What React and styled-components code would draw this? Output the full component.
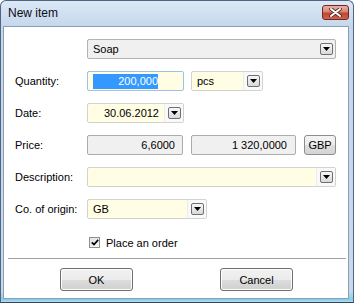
import styled, { createGlobalStyle } from "styled-components";

const GlobalStyle = createGlobalStyle`
  html, body {
    margin: 0;
    padding: 0;
    background: #ffffff;
  }
  body {
    font-family: "Liberation Sans", Arial, sans-serif;
    font-size: 11px;
    color: #000;
  }
`;

const Window = styled.div`
  width: 354px;
  height: 303px;
  box-sizing: border-box;
  display: flex;
  flex-direction: column;
  padding: 0 4px 3px 2px;
  border: 1px solid #4f6580;
  border-bottom-color: #2b4563;
  border-radius: 6px 6px 0 0;
  background: linear-gradient(#dce8f5 0px, #c5d7ed 26px, #c8d9ee 290px, #7fd0ea 299px, #c8d9ee 301px);
`;

const TitleBar = styled.div`
  height: 25px;
  display: flex;
  justify-content: space-between;
  padding: 0 0 0 5px;
`;

const Title = styled.span`
  font-size: 12px;
  line-height: 25px;
  color: #0c0c18;
`;

const CloseButton = styled.div`
  width: 27px;
  height: 15px;
  margin-top: 4px;
  box-sizing: border-box;
  display: flex;
  align-items: center;
  justify-content: center;
  border: 1px solid #6b2a24;
  border-radius: 3px;
  background: linear-gradient(#eab0a4 0%, #d98473 45%, #c2452f 55%, #d0634c 100%);
`;

const Client = styled.div`
  flex: 1;
  display: flex;
  flex-direction: column;
  background: #ffffff;
  border: 1px solid #8c9db4;
`;

const Form = styled.div`
  display: grid;
  grid-template-columns: 72px 1fr;
  grid-auto-rows: 20px;
  row-gap: 12px;
  padding: 12px 12px 0 11px;
`;

const Label = styled.div`
  grid-column: 1;
  display: flex;
  align-items: center;
`;

const Row = styled.div`
  grid-column: 2;
  display: flex;
  align-items: center;
  gap: ${(p) => p.$gap ?? 7}px;
`;

const Combo = styled.div`
  width: ${(p) => (p.$w ? `${p.$w}px` : "100%")};
  height: 20px;
  box-sizing: border-box;
  display: flex;
  border: 1px solid ${(p) => (p.$focus ? "#9ec1e6" : p.$gray ? "#b3b3b3" : "#d2d2d2")};
  border-radius: 2px;
  background: ${(p) => (p.$gray ? "#f0f0f0" : "#fffee4")};
`;

const Value = styled.div`
  flex: 1;
  display: flex;
  align-items: center;
  justify-content: ${(p) => (p.$right ? "flex-end" : "flex-start")};
  padding: 0 ${(p) => p.$pr ?? 5}px 0 5px;
`;

const ButtonArea = styled.div`
  width: 18px;
  display: flex;
  align-items: center;
  justify-content: center;
  background: ${(p) => (p.$gray ? "transparent" : "#f9f9f9")};
  border-left: 1px solid ${(p) => (p.$gray ? "transparent" : "#ececec")};
`;

const DropButton = styled.div`
  width: 13px;
  height: 12px;
  box-sizing: border-box;
  display: flex;
  align-items: center;
  justify-content: center;
  border: 1px solid #6f6f6f;
  border-radius: 2px;
  background: linear-gradient(#f7f7f7, #d9d9d9);
`;

const Selected = styled.span`
  width: 65px;
  height: 15px;
  display: flex;
  align-items: center;
  justify-content: flex-end;
  background: #3399ff;
  color: #ffffff;
`;

const Field = styled.div`
  width: ${(p) => p.$w}px;
  height: 20px;
  box-sizing: border-box;
  display: flex;
  align-items: center;
  justify-content: flex-end;
  padding-right: ${(p) => p.$pr ?? 7}px;
  border: 1px solid #acacac;
  border-radius: 2px;
  background: #f0f0f0;
`;

const SmallButton = styled.div`
  width: 32px;
  height: 20px;
  box-sizing: border-box;
  display: flex;
  align-items: center;
  justify-content: center;
  border: 1px solid #8d8d8d;
  border-radius: 3px;
  background: linear-gradient(#f4f4f4 0%, #ececec 50%, #dedede 51%, #d4d4d4 100%);
`;

const CheckRow = styled.label`
  grid-column: 2;
  margin-top: 3px;
  padding-left: 2px;
  display: flex;
  align-items: center;
  gap: 6px;
`;

const CheckBox = styled.span`
  width: 11px;
  height: 11px;
  box-sizing: border-box;
  display: flex;
  align-items: center;
  justify-content: center;
  border: 1px solid #8e8f8f;
  background: linear-gradient(135deg, #e0e0e0, #fafafa);
`;

const Footer = styled.div`
  margin: auto 2px 0 4px;
  border-top: 1px solid #a0a0a0;
  padding: 9px 0 7px 52px;
  display: flex;
  gap: 87px;
`;

const PushButton = styled.div`
  width: 73px;
  height: 23px;
  box-sizing: border-box;
  display: flex;
  align-items: center;
  justify-content: center;
  border: 1px solid #707070;
  border-radius: 3px;
  background: linear-gradient(#f2f2f2 0%, #ebebeb 50%, #dddddd 51%, #cfcfcf 100%);
  box-shadow: inset 0 0 0 1px #fcfcfc;
`;

const Arrow = () => (
  <svg width="7" height="4" viewBox="0 0 7 4">
    <path d="M0 0 H7 L3.5 4 Z" fill="#000" />
  </svg>
);

const Drop = ({ gray }) => (
  <ButtonArea $gray={gray}>
    <DropButton>
      <Arrow />
    </DropButton>
  </ButtonArea>
);

const CloseGlyph = () => (
  <svg width="13" height="9" viewBox="0 0 13 9">
    <path d="M2 1 L11 8 M11 1 L2 8" stroke="#4b2420" strokeWidth="3.6" strokeLinecap="round" />
    <path d="M2 1 L11 8 M11 1 L2 8" stroke="#ffffff" strokeWidth="2" strokeLinecap="round" />
  </svg>
);

const Check = () => (
  <svg width="8" height="7" viewBox="0 0 8 7">
    <path d="M0.8 3.4 L3 5.6 L7.2 0.9" stroke="#000" strokeWidth="1.7" fill="none" />
  </svg>
);

export default function App() {
  return (
    <>
      <GlobalStyle />
      <Window>
        <TitleBar>
          <Title>New item</Title>
          <CloseButton>
            <CloseGlyph />
          </CloseButton>
        </TitleBar>
        <Client>
          <Form>
            <Row>
              <Combo $gray>
                <Value>Soap</Value>
                <Drop gray />
              </Combo>
            </Row>

            <Label>Quantity:</Label>
            <Row $gap={7}>
              <Combo $w={97} $focus>
                <Value $right $pr={25}>
                  <Selected>200,000</Selected>
                </Value>
              </Combo>
              <Combo $w={72}>
                <Value>pcs</Value>
                <Drop />
              </Combo>
            </Row>

            <Label>Date:</Label>
            <Row>
              <Combo $w={97}>
                <Value $right>30.06.2012</Value>
                <Drop />
              </Combo>
            </Row>

            <Label>Price:</Label>
            <Row $gap={8}>
              <Field $w={96}>6,6000</Field>
              <Field $w={105} $pr={8}>1 320,0000</Field>
              <SmallButton>GBP</SmallButton>
            </Row>

            <Label>Description:</Label>
            <Row>
              <Combo>
                <Value />
                <Drop />
              </Combo>
            </Row>

            <Label>Co. of origin:</Label>
            <Row>
              <Combo $w={120}>
                <Value>GB</Value>
                <Drop />
              </Combo>
            </Row>

            <CheckRow>
              <CheckBox>
                <Check />
              </CheckBox>
              Place an order
            </CheckRow>
          </Form>

          <Footer>
            <PushButton>OK</PushButton>
            <PushButton>Cancel</PushButton>
          </Footer>
        </Client>
      </Window>
    </>
  );
}
